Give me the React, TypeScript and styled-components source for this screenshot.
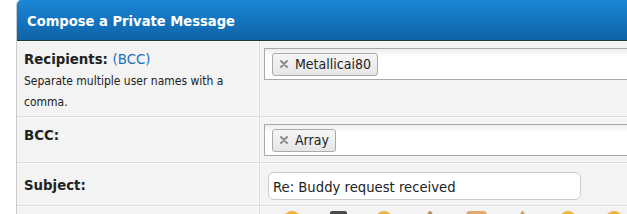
import React from "react";
import styled, { createGlobalStyle } from "styled-components";

const Global = createGlobalStyle`
  html, body { margin: 0; padding: 0; background: #ffffff; overflow: hidden; }
  body { font-family: "DejaVu Sans Condensed", "DejaVu Sans", Tahoma, sans-serif; color: #222; }
`;

const Panel = styled.div`
  margin-left: 16px;
  width: 680px;
  border: 1px solid #c9c9c9;
  border-top: none;
  border-top-left-radius: 5px;
  overflow: hidden;
  background: #f3f3f3;
`;

const Header = styled.div`
  height: 41px;
  box-sizing: border-box;
  padding: 0 10px;
  display: flex;
  align-items: center;
  background: linear-gradient(to bottom, #1b86d6 0%, #1473be 55%, #0f63a6 100%);
  border-bottom: 1px solid #1f3a38;
  color: #fff;
  font-weight: bold;
  font-size: 14.6px;
`;

const Row = styled.div`
  display: grid;
  grid-template-columns: 243px 1fr;
  border-bottom: 1px solid #dcdcdc;
  box-shadow: inset 0 1px 0 #fafafa;
`;

const LabelCell = styled.div<{ $top: number; $bottom?: number }>`
  padding: ${(p) => p.$top}px 7px ${(p) => p.$bottom ?? 4}px 7px;
  border-right: 1px solid #dcdcdc;
  box-shadow: inset -1px 0 0 #fafafa;
`;

const Label = styled.div`
  font-size: 14.8px;
  line-height: 18px;
  font-weight: bold;
  color: #222;
`;

const Bcc = styled.a`
  font-weight: normal;
  color: #1b6fba;
  text-decoration: none;
`;

const Hint = styled.div`
  margin-top: 3px;
  font-size: 12px;
  line-height: 21px;
  color: #222;
`;

const FieldCell = styled.div<{ $pad: string }>`
  padding: ${(p) => p.$pad};
`;

const TokenBox = styled.div`
  height: 32px;
  box-sizing: border-box;
  border: 1px solid #a9a9a9;
  background: linear-gradient(to bottom, #eeeeee 0%, #ffffff 25%, #ffffff 100%);
  display: flex;
  align-items: center;
  padding-left: 7px;
`;

const Token = styled.span`
  display: inline-flex;
  align-items: center;
  gap: 7px;
  height: 23px;
  box-sizing: border-box;
  padding: 0 6px 0 7px;
  border: 1px solid #aaaaaa;
  border-radius: 3px;
  background: linear-gradient(to bottom, #f6f6f6 0%, #e6e6e6 100%);
  font-size: 14px;
  color: #222;
`;

const TextInput = styled.div`
  width: 313px;
  height: 28px;
  box-sizing: border-box;
  border: 1px solid #cdcdcd;
  border-radius: 6px;
  background: #fff;
  display: flex;
  align-items: center;
  padding-left: 4px;
  font-size: 14.7px;
  color: #222;
`;

const Toolbar = styled.div`
  display: flex;
  padding: 5px 0 0 9px;
  height: 20px;
`;

const Slot = styled.div`
  width: 46px;
  display: flex;
  justify-content: center;
`;

const Icon = styled.div<{ $w: number; $c: string; $r: string }>`
  width: ${(p) => p.$w}px;
  height: 16px;
  background: ${(p) => p.$c};
  border-radius: ${(p) => p.$r};
`;

const XMark = () => (
  <svg width="8" height="8" viewBox="0 0 8 8">
    <path d="M1 1L7 7M7 1L1 7" stroke="#8d8d8d" strokeWidth="2" strokeLinecap="round" />
  </svg>
);

const icons = [
  { w: 16, c: "#f2b23a", r: "50%" },
  { w: 17, c: "#4a4a4a", r: "2px" },
  { w: 16, c: "#f0b340", r: "50%" },
  { w: 6, c: "#b98a55", r: "50%" },
  { w: 21, c: "#e3a870", r: "4px 4px 2px 2px" },
  { w: 5, c: "#c9a060", r: "50%" },
  { w: 16, c: "#f2b63e", r: "50%" },
  { w: 16, c: "#f2b23a", r: "50%" },
];

export default function App() {
  return (
    <>
      <Global />
      <Panel>
        <Header>Compose a Private Message</Header>
        <Row>
          <LabelCell $top={9} $bottom={3}>
            <Label>
              Recipients: <Bcc href="#">(BCC)</Bcc>
            </Label>
            <Hint>Separate multiple user names with a comma.</Hint>
          </LabelCell>
          <FieldCell $pad="7px 0 6px 4px">
            <TokenBox>
              <Token>
                <XMark />
                Metallicai80
              </Token>
            </TokenBox>
          </FieldCell>
        </Row>
        <Row>
          <LabelCell $top={9}>
            <Label>BCC:</Label>
          </LabelCell>
          <FieldCell $pad="7px 0 6px 4px">
            <TokenBox>
              <Token>
                <XMark />
                Array
              </Token>
            </TokenBox>
          </FieldCell>
        </Row>
        <Row>
          <LabelCell $top={13}>
            <Label>Subject:</Label>
          </LabelCell>
          <FieldCell $pad="9px 0 5px 8px">
            <TextInput>Re: Buddy request received</TextInput>
          </FieldCell>
        </Row>
        <Row>
          <LabelCell $top={9} />
          <FieldCell $pad="0">
            <Toolbar>
              {icons.map((ic, i) => (
                <Slot key={i}>
                  <Icon $w={ic.w} $c={ic.c} $r={ic.r} />
                </Slot>
              ))}
            </Toolbar>
          </FieldCell>
        </Row>
      </Panel>
    </>
  );
}
